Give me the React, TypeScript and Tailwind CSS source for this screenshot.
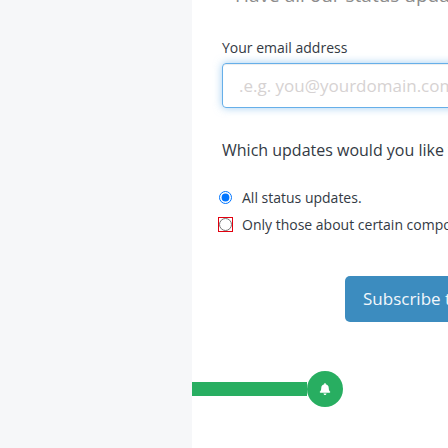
import { FaBell } from 'react-icons/fa';

const App = () => {
    return (
        <div className="w-[448px] h-[448px] overflow-hidden flex bg-white font-['Open_Sans',sans-serif]">
            {/* Sidebar */}
            <div className="w-[192px] shrink-0 bg-[#f6f7f9]"></div>

            {/* Main */}
            <div className="flex-1 flex flex-col min-w-0">
                <div className="pl-[30px] flex flex-col">
                    <p className="mt-[-19px] h-[28px] leading-[28px] text-[19px] text-[#8c8c8c] whitespace-nowrap pl-[13px]">
                        Have all our status updates sent to you
                    </p>

                    <label className="mt-[28px] h-[21px] leading-[21px] text-[14px] text-[#333a44] whitespace-nowrap">
                        Your email address
                    </label>
                    <input
                        type="email"
                        placeholder=".e.g. you@yourdomain.com"
                        className="mt-[5px] w-[420px] h-[45px] shrink-0 rounded-[4px] border border-[#66afe9] px-[16px] text-[17px] text-[#333] placeholder:text-[#d6d2d2] outline-none shadow-[inset_0_1px_1px_rgba(0,0,0,0.075),0_0_8px_rgba(102,175,233,0.6)]"
                    />

                    <h3 className="mt-[30px] h-[25px] leading-[25px] text-[16px] text-[#333a44] whitespace-nowrap">
                        Which updates would you like to receive?
                    </h3>

                    <div className="mt-[24px] -ml-[3px] flex flex-col gap-[6px]">
                        <label className="flex items-center gap-[10px] h-[21px] text-[14px] leading-[21px] text-[#333a44] whitespace-nowrap">
                            <input type="radio" name="updates" defaultChecked className="w-[13px] h-[13px] m-0 shrink-0" />
                            All status updates.
                        </label>
                        <label className="flex items-center gap-[10px] h-[21px] text-[14px] leading-[21px] text-[#333a44] whitespace-nowrap">
                            <input type="radio" name="updates" className="w-[13px] h-[13px] m-0 shrink-0 outline outline-1 outline-[#e3000f]" />
                            Only those about certain components.
                        </label>
                    </div>

                    <div className="mt-[41px] ml-[123px]">
                        <button className="h-[46px] px-[18px] rounded-[5px] bg-[#3c8cbf] text-[17px] text-[#f2f7fb] whitespace-nowrap">
                            Subscribe to updates
                        </button>
                    </div>
                </div>

                {/* Progress */}
                <div className="mt-[49px] flex items-center">
                    <div className="w-[115px] h-[14px] bg-[#28ae61]"></div>
                    <div className="w-[36px] h-[36px] shrink-0 rounded-full bg-[#28ae61] flex items-center justify-center">
                        <FaBell className="w-[12px] h-[12px] text-white" />
                    </div>
                </div>
            </div>
        </div>
    );
};

export default App;
